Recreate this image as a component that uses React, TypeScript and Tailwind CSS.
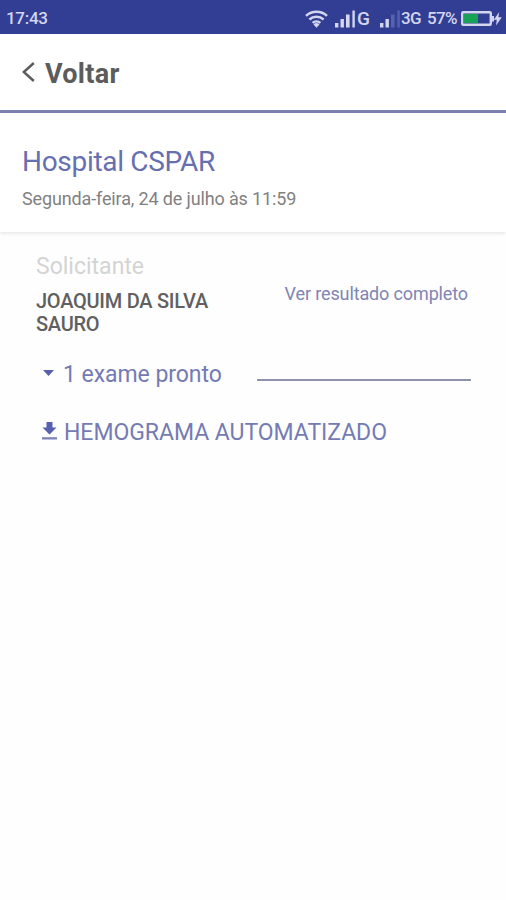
function WifiIcon() {
  return (
    <svg width="23" height="18" viewBox="0 0 23 18" fill="none" stroke="#d3d6ee" strokeWidth="2.5">
      <path d="M1 5.800a15.500 15.500 0 0 1 21 0" />
      <path d="M4.400 9.500a10.500 10.500 0 0 1 14.200 0" />
      <path d="M7.600 12.900a6 6 0 0 1 7.800 0" />
      <path d="M8.500 14.500 11.500 17.800l3-3.300a4.400 4.400 0 0 0-6 0z" fill="#d3d6ee" stroke="none" />
    </svg>
  );
}

interface SignalIconProps {
  level: number;
}

function SignalIcon({ level }: SignalIconProps) {
  const bars = [
    { x: 0, w: 3.4, h: 4.5 },
    { x: 5.5, w: 3.4, h: 8.5 },
    { x: 11, w: 3.6, h: 13 },
    { x: 17.4, w: 2.4, h: 17 },
  ];

  return (
    <svg width="21" height="18" viewBox="0 0 21 18">
      {bars.map((bar, i) => (
        <rect
          key={bar.x}
          x={bar.x}
          y={17.5 - bar.h}
          width={bar.w}
          height={bar.h}
          fill={i < level ? "#d3d6ee" : "#5661af"}
        />
      ))}
    </svg>
  );
}

function BatteryIcon() {
  return (
    <svg width="42" height="18" viewBox="0 0 42 18">
      <rect x="1.200" y="2.200" width="28.600" height="12.600" rx="1" fill="none" stroke="#d3d6ee" strokeWidth="2.400" />
      <rect x="3" y="4" width="14" height="9" fill="#17a355" />
      <path d="M30.500 6h2.500v5.500h-2.500z" fill="#d3d6ee" />
      <path d="M38.200 2 32.800 9.800h3L35 15.500 40.800 7.200h-3.400z" fill="#d3d6ee" />
    </svg>
  );
}

function StatusBar() {
  return (
    <div className="flex h-[34px] items-center bg-[#323e93] pt-[3px] pl-[6px] text-[17px] text-[#d3d6ee]">
      <span className="w-[299px] font-medium tracking-[-0.3px]">17:43</span>
      <WifiIcon />
      <div className="ml-[7px] flex items-center">
        <SignalIcon level={4} />
        <span className="ml-px w-4 text-[19px] leading-5 font-medium">G</span>
      </div>
      <div className="ml-[7px] flex items-center">
        <SignalIcon level={2} />
        <span className="w-[26px] font-medium tracking-[-0.6px]">3G</span>
      </div>
      <span className="w-[34px] font-medium tracking-[-0.6px]">57%</span>
      <BatteryIcon />
    </div>
  );
}

export default function App() {
  return (
    <div className="h-[900px] w-[506px] overflow-hidden bg-[#fefefe] font-['Roboto','Liberation_Sans',sans-serif]">
      <StatusBar />

      <header className="flex h-[79px] items-center border-b-[3px] border-[#7d82b0] bg-white pl-[22px] text-[#5c5c5c]">
        <svg width="13" height="20" viewBox="0 0 13 20" fill="none" stroke="#5c5c5c" strokeWidth="2.500">
          <path d="M11.800 1 1.800 10l10 9" />
        </svg>
        <span className="mt-1 ml-[10px] text-[27px] leading-8 font-bold tracking-[0.3px]">Voltar</span>
      </header>

      <section className="h-[119px] bg-white pt-[31px] pl-[22px] shadow-[0_1px_4px_rgba(0,0,0,0.12)]">
        <h1 className="text-[28px] leading-[35px] tracking-[-0.3px] text-[#666fb0]">Hospital CSPAR</h1>
        <p className="mt-[8px] text-[18px] leading-6 tracking-[-0.14px] text-[#818181]">
          Segunda-feira, 24 de julho às 11:59
        </p>
      </section>

      <main className="pr-[35px] pl-9">
        <div className="flex justify-between pt-[20px]">
          <div className="w-[200px]">
            <div className="pt-px text-[23px] leading-7 text-[#d4d4d4]">Solicitante</div>
            <div className="mt-[9px] text-[20px] leading-[23px] font-medium tracking-[-0.26px] text-[#606060]">
              JOAQUIM DA SILVA SAURO
            </div>
          </div>
          <a className="mt-[30px] mr-[3px] text-[18px] leading-6 tracking-[-0.13px] text-[#8085b4]">
            Ver resultado completo
          </a>
        </div>

        <div className="mt-[23px] flex h-8 items-center text-[#747bb4]">
          <svg className="-mt-1 ml-[7px]" width="11" height="6" viewBox="0 0 11 6">
            <path d="M0 0h11L5.500 6z" fill="#5660ae" />
          </svg>
          <span className="ml-[9px] w-[194px] text-[23px] tracking-[-0.05px]">1 exame pronto</span>
          <div className="mt-[9px] h-[2px] flex-1 bg-[#8e92ae]" />
        </div>

        <div className="mt-[26px] flex h-8 items-center text-[#747bb4]">
          <svg className="-mt-1 ml-[6px]" width="15" height="18" viewBox="0 0 15 18" fill="#5660ae">
            <path d="M4.500 0h6v5.500h4L7.500 12.500.5 5.500h4z" />
            <path d="M0 15.200h15v2.300H0z" fill="#7c83b8" />
          </svg>
          <span className="ml-[7px] text-[23px] tracking-[-0.04px]">HEMOGRAMA AUTOMATIZADO</span>
        </div>
      </main>
    </div>
  );
}
